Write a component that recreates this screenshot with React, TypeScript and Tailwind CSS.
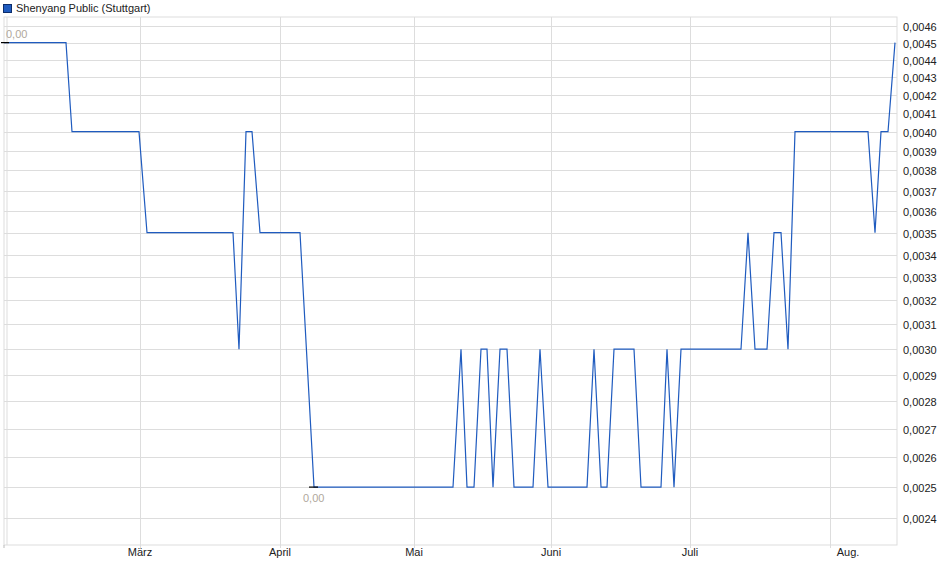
const pts: [number, number][] = [
  [4, 45], [66, 45], [72, 40], [139, 40], [147, 35], [233, 35], [239, 30], [246, 40], [252, 40], [260, 35], [300, 35], [314, 25],
  [453, 25], [461, 30], [467, 25], [474, 25], [481, 30], [487, 30], [493, 25], [500, 30], [507, 30], [514, 25], [533, 25], [540, 30],
  [548, 25], [587, 25], [594, 30], [601, 25], [607, 25], [614, 30], [634, 30], [641, 25], [661, 25], [667, 30], [674, 25], [681, 30],
  [741, 30], [748, 35], [755, 30], [767, 30], [774, 35], [781, 35], [788, 30], [795, 40], [868, 40], [875, 35], [881, 40], [888, 40], [895, 45],
];

// log scale: value in 1/10000
const yOf = (v: number) => 26 + 756.2 * Math.log(46 / v);

const ticks = Array.from({ length: 23 }, (_, i) => 46 - i);
const months = [
  { x: 140, label: 'März' },
  { x: 280, label: 'April' },
  { x: 414, label: 'Mai' },
  { x: 551, label: 'Juni' },
  { x: 690, label: 'Juli' },
  { x: 830, label: 'Aug.', dx: 18 },
];

export default function App() {
  return (
    <div className="w-[940px] h-[579px] bg-white relative" style={{ fontFamily: '"Liberation Sans", Arial, sans-serif' }}>
      <div className="absolute left-[3px] top-0 flex items-center gap-[4px] text-[11px] text-[#222]">
        <span className="w-[9px] h-[9px] bg-[#1f5bbf] border border-[#0d2d6b]" />
        Shenyang Public (Stuttgart)
      </div>
      <svg width="940" height="579" className="block">
        <rect x="4" y="17" width="893" height="528" fill="none" stroke="#dddddd" />
        <line x1="7" y1="17" x2="7" y2="545" stroke="#dddddd" />
        {ticks.map((t) => {
          const y = Math.round(yOf(t)) + 0.5;
          return (
            <g key={t}>
              <line x1="4" y1={y} x2="897" y2={y} stroke="#dddddd" />
              <text x="903" y={y + 4} fontSize="11" fill="#222">
                0,00{t}
              </text>
            </g>
          );
        })}
        {months.map((m) => (
          <g key={m.label}>
            <line x1={m.x + 0.5} y1="17" x2={m.x + 0.5} y2="548" stroke="#dddddd" />
            <text x={m.x + (m.dx ?? 0)} y="556" fontSize="11" fill="#222" textAnchor="middle">
              {m.label}
            </text>
          </g>
        ))}
        <line x1="4" y1="545" x2="4" y2="548" stroke="#bbb" />
        <polyline
          points={pts.map(([x, v]) => `${x},${yOf(v).toFixed(1)}`).join(' ')}
          fill="none"
          stroke="#1f5bbf"
          strokeWidth="1.2"
        />
        <line x1="1" y1={yOf(45)} x2="9" y2={yOf(45)} stroke="#000" strokeWidth="1.2" />
        <line x1="309" y1={yOf(25)} x2="318" y2={yOf(25)} stroke="#000" strokeWidth="1.2" />
        <text x="6" y="38" fontSize="11" fill="#b0a89c">0,00</text>
        <text x="303" y="502" fontSize="11" fill="#b0a89c">0,00</text>
      </svg>
    </div>
  );
}
